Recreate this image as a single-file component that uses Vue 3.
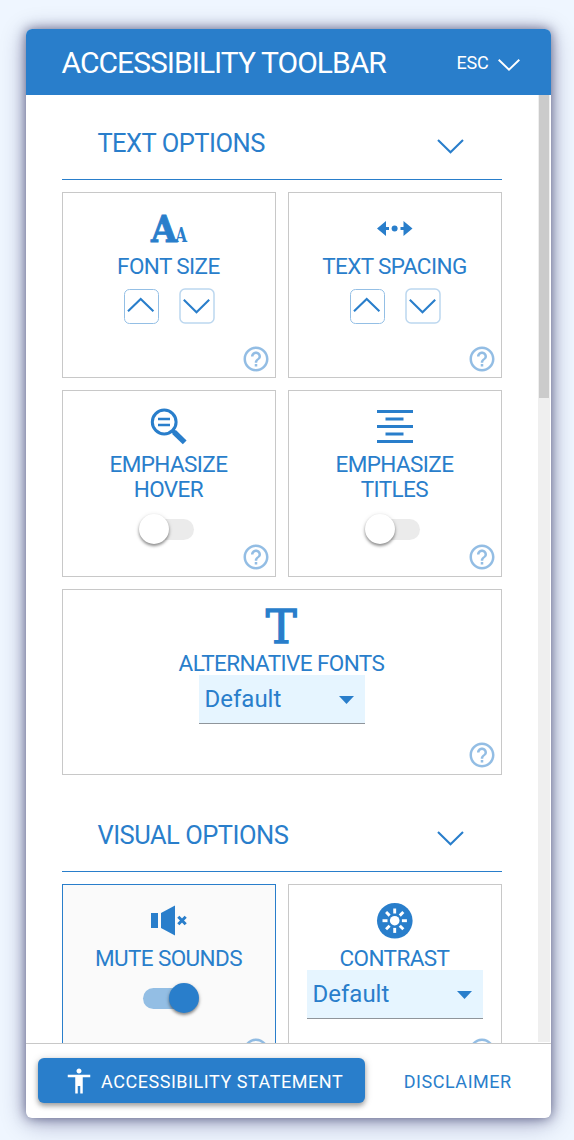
<script setup>
const sections = [
  {
    title: 'TEXT OPTIONS',
    cards: [
      { label: ['FONT SIZE'], icon: 'size', control: 'stepper' },
      { label: ['TEXT SPACING'], icon: 'spacing', control: 'stepper' },
      { label: ['EMPHASIZE', 'HOVER'], icon: 'magnifier', control: 'toggle' },
      { label: ['EMPHASIZE', 'TITLES'], icon: 'lines', control: 'toggle' },
      { label: ['ALTERNATIVE FONTS'], icon: 'font', control: 'select', wide: true }
    ]
  },
  {
    title: 'VISUAL OPTIONS',
    cards: [
      { label: ['MUTE SOUNDS'], icon: 'mute', control: 'toggle', on: true },
      { label: ['CONTRAST'], icon: 'contrast', control: 'select' }
    ]
  }
]
const rays = [0, 45, 90, 135, 180, 225, 270, 315]
</script>

<template>
  <div class="page">
    <main class="panel">
      <header class="head">
        <h1>ACCESSIBILITY TOOLBAR</h1>
        <button class="esc">
          <span>ESC</span>
          <svg width="22" height="12" viewBox="0 0 22 12"><path d="M.7 .7 11 10.6 21.3 .7" fill="none" stroke="#fff" stroke-width="1.9" /></svg>
        </button>
      </header>

      <div class="body">
        <div class="content">
          <section v-for="s in sections" :key="s.title">
            <div class="section-head">
              <h2>{{ s.title }}</h2>
              <svg width="27" height="15" viewBox="0 0 27 15"><path d="M1 1 13.5 13.2 26 1" fill="none" stroke="currentColor" stroke-width="2.1" /></svg>
            </div>
            <div class="grid">
              <div v-for="c in s.cards" :key="c.icon" class="card" :class="{ wide: c.wide, on: c.on }">
                <svg class="icon" width="36" height="36" viewBox="0 0 36 36" fill="currentColor">
                  <g v-if="c.icon === 'size'" class="slab">
                    <text class="big" x="0" y="31" font-size="37" textLength="26" lengthAdjust="spacingAndGlyphs">A</text>
                    <text x="24.500" y="31.300" font-size="21" textLength="11.500" lengthAdjust="spacingAndGlyphs">A</text>
                  </g>
                  <g v-else-if="c.icon === 'spacing'">
                    <path d="M0 17.500 9 10v6h3v3H9v6zM35.500 17.500 26.500 10v6h-3v3h3v6z" />
                    <circle cx="17.600" cy="17.500" r="3" />
                  </g>
                  <g v-else-if="c.icon === 'magnifier'" fill="none" stroke="currentColor">
                    <circle cx="13.200" cy="13" r="11.900" stroke-width="3" />
                    <path d="M7 10h12M7 16h12" stroke-width="2.700" />
                    <path d="m21.500 21.500 3 3" stroke-width="4" />
                    <path d="m23 23 10.700 10.400" stroke-width="5.400" />
                  </g>
                  <path v-else-if="c.icon === 'lines'" d="M0 1h36v3H0zM8.500 8.500h18v3h-18zM0 16h36v3H0zM8.500 23.500h18v3h-18zM0 31h36v3H0z" />
                  <g v-else-if="c.icon === 'font'" class="serif">
                    <text x="1.700" y="34.600" font-size="47.500" textLength="31" lengthAdjust="spacingAndGlyphs">T</text>
                  </g>
                  <g v-else-if="c.icon === 'mute'">
                    <path d="M0 10h7v15H0zM10 10 24 2.500v30L10 25z" />
                    <path d="m27.300 13.800 7.400 7.400m0-7.400-7.400 7.400" stroke="currentColor" stroke-width="3" />
                  </g>
                  <g v-else>
                    <circle cx="17.800" cy="17.800" r="17.800" />
                    <circle cx="17.700" cy="17.700" r="4.800" fill="#fff" />
                    <path v-for="r in rays" :key="r" d="M17.700 5.500v5" :transform="`rotate(${r} 17.700 17.700)`" stroke="#fff" stroke-width="2.900" />
                  </g>
                </svg>
                <div class="label"><div v-for="l in c.label" :key="l">{{ l }}</div></div>

                <div v-if="c.control === 'stepper'" class="stepper">
                  <svg width="35" height="35" viewBox="0 0 35 35" fill="none">
                    <rect x=".5" y=".5" width="34" height="34" rx="5" stroke="#94bfe5" />
                    <path d="M4 22.300 16.700 10 29.400 22.300" stroke="currentColor" stroke-width="2.100" />
                  </svg>
                  <svg width="36" height="36" viewBox="0 0 36 36" fill="none">
                    <rect x="1" y="1" width="34" height="34" rx="5" stroke="#bcd7ef" stroke-width="1.500" />
                    <path d="M4.800 11.800 17.500 24.200 30.200 11.800" stroke="currentColor" stroke-width="2.100" />
                  </svg>
                </div>
                <div v-else-if="c.control === 'toggle'" class="toggle"><i></i></div>
                <div v-else class="select">
                  <span>Default</span>
                  <svg width="15" height="8" viewBox="0 0 15 8"><path d="M0 0h15L7.500 8z" fill="currentColor" /></svg>
                </div>

                <svg class="help" width="30" height="30" viewBox="0 0 24 24" fill="currentColor"><path d="M11 18h2v-2h-2v2zm1-16C6.480 2 2 6.480 2 12s4.480 10 10 10 10-4.480 10-10S17.520 2 12 2zm0 18c-4.410 0-8-3.590-8-8s3.590-8 8-8 8 3.590 8 8-3.590 8-8 8zm0-14c-2.210 0-4 1.790-4 4h2c0-1.100.9-2 2-2s2 .9 2 2c0 2-3 1.750-3 5h2c0-2.250 3-2.500 3-5 0-2.210-1.790-4-4-4z" /></svg>
              </div>
            </div>
          </section>
        </div>
        <div class="track"><div class="thumb"></div></div>
      </div>

      <footer class="foot">
        <button class="statement">
          <svg width="30" height="30" viewBox="0 0 24 24" fill="#fff"><path d="M12 2c1.100 0 2 .9 2 2s-.9 2-2 2-2-.9-2-2 .9-2 2-2zm9 7h-6v13h-2v-6h-2v6H9V9H3V7h18v2z" /></svg>
          <span>ACCESSIBILITY STATEMENT</span>
        </button>
        <button class="disclaimer">DISCLAIMER</button>
      </footer>
    </main>
  </div>
</template>

<style>
body { background: #eff6ff; overflow: hidden; }
</style>

<style scoped>
* { box-sizing: border-box; }
.page { height: 1140px; padding: 29px 23px 22px 26px; color: #297ecb; font-family: Roboto, sans-serif; }
.panel {
  display: flex; flex-direction: column; width: 525px; height: 1089px;
  border-radius: 6px; background: #fff;
  box-shadow: 0 0 12px rgba(0, 0, 50, .5), 0 4px 26px rgba(0, 0, 80, .33);
}
h1, h2 { margin: 0; font-weight: 400; }
button { border: 0; background: none; padding: 0; font: inherit; color: inherit; }
svg { display: block; flex: none; }
.head {
  display: flex; justify-content: space-between; align-items: center; flex: none; height: 66px;
  padding: 2px 31.5px 0 35.5px; border-radius: 6px 6px 0 0; background: #297ecb; color: #fff;
}
h1 { font-size: 30px; letter-spacing: -.97px; line-height: 36px; white-space: nowrap; }
.esc { display: flex; align-items: center; gap: 9px; margin-top: -1px; font-size: 18px; letter-spacing: -.2px; }
.esc svg { margin-top: 4px; }
.body { display: flex; flex: 1; min-height: 0; overflow: hidden; }
.content { flex: 1; padding: 0 36px; overflow: hidden; }
.section-head {
  display: flex; justify-content: space-between; align-items: center; height: 85px;
  padding: 12px 38px 0 35.4px; margin-bottom: 12px; border-bottom: 1px solid #297ecb;
}
.section-head svg { margin-top: 7px; }
h2 { font-size: 25.5px; letter-spacing: -.5px; line-height: 30px; }
.grid { display: grid; grid-template-columns: 214px 214px; grid-auto-rows: 186.33px; gap: 12px; margin-bottom: 12px; }
.card {
  position: relative; display: flex; flex-direction: column; align-items: center;
  padding-top: 18px; border: 1px solid #c8c8c8; background: #fff;
}
.card.wide { grid-column: span 2; }
.card.on { border-color: #297ecb; background: #fafafa; }
.icon { overflow: visible; }
.slab { font-family: "DejaVu Serif", serif; font-weight: 700; }
.big { stroke: currentColor; stroke-width: .9px; }
.serif { font-family: "DejaVu Serif", serif; stroke: currentColor; stroke-width: 1.4px; }
.label { margin: 7px 1.2px 0 0; font-size: 22.5px; letter-spacing: -.6px; line-height: 25px; text-align: center; white-space: nowrap; }
.stepper { display: flex; align-items: flex-end; gap: 20px; margin: 9px 0 0 1px; }
.toggle { position: relative; width: 51px; height: 21px; margin: 16.67px 2px 0 0; border-radius: 11px; background: #ebebeb; }
.toggle i {
  position: absolute; top: -5px; left: -4px; width: 30px; height: 30px; border-radius: 50%;
  background: #fff; box-shadow: 0 2px 3px rgba(0, 0, 0, .4), 0 1px 5px rgba(0, 0, 0, .12);
}
.on .toggle { background: #93bee4; }
.on .toggle i { left: 26px; background: #297ecb; }
.select {
  display: flex; align-items: center; justify-content: space-between; width: 176px; height: 49px;
  margin-top: -1px; padding: 0 11px 0 5.5px; border-bottom: 1px solid #8f959b; background: #e6f5ff;
  font-size: 24px;
}
.select svg { margin-top: 2px; }
.wide .select { width: 166px; }
.help { position: absolute; right: 4px; bottom: 3.5px; opacity: .5; }
.track { width: 13px; height: calc(100% - 1px); padding: 0 2px 0 1px; background: linear-gradient(90deg, #efefef 12px, #fff 12px); }
.thumb { height: 303px; background: #cbcbcb; }
.foot { display: flex; align-items: center; flex: none; height: 75px; padding: 0 12px 1px; border-top: 1px solid #c8c8c8; }
.statement {
  display: flex; align-items: center; width: 327px; height: 45px; padding-left: 26px; gap: 7px;
  border-radius: 6px; background: #297ecb; color: #fff; font-size: 18px; letter-spacing: .54px; white-space: nowrap;
  box-shadow: 0 3px 5px rgba(0, 0, 0, .3), 0 1px 8px rgba(0, 0, 0, .16);
}
.disclaimer { margin: 1px 0 0 38.7px; font-size: 18px; letter-spacing: .54px; }
.statement span { padding-top: 1px; }
</style>
